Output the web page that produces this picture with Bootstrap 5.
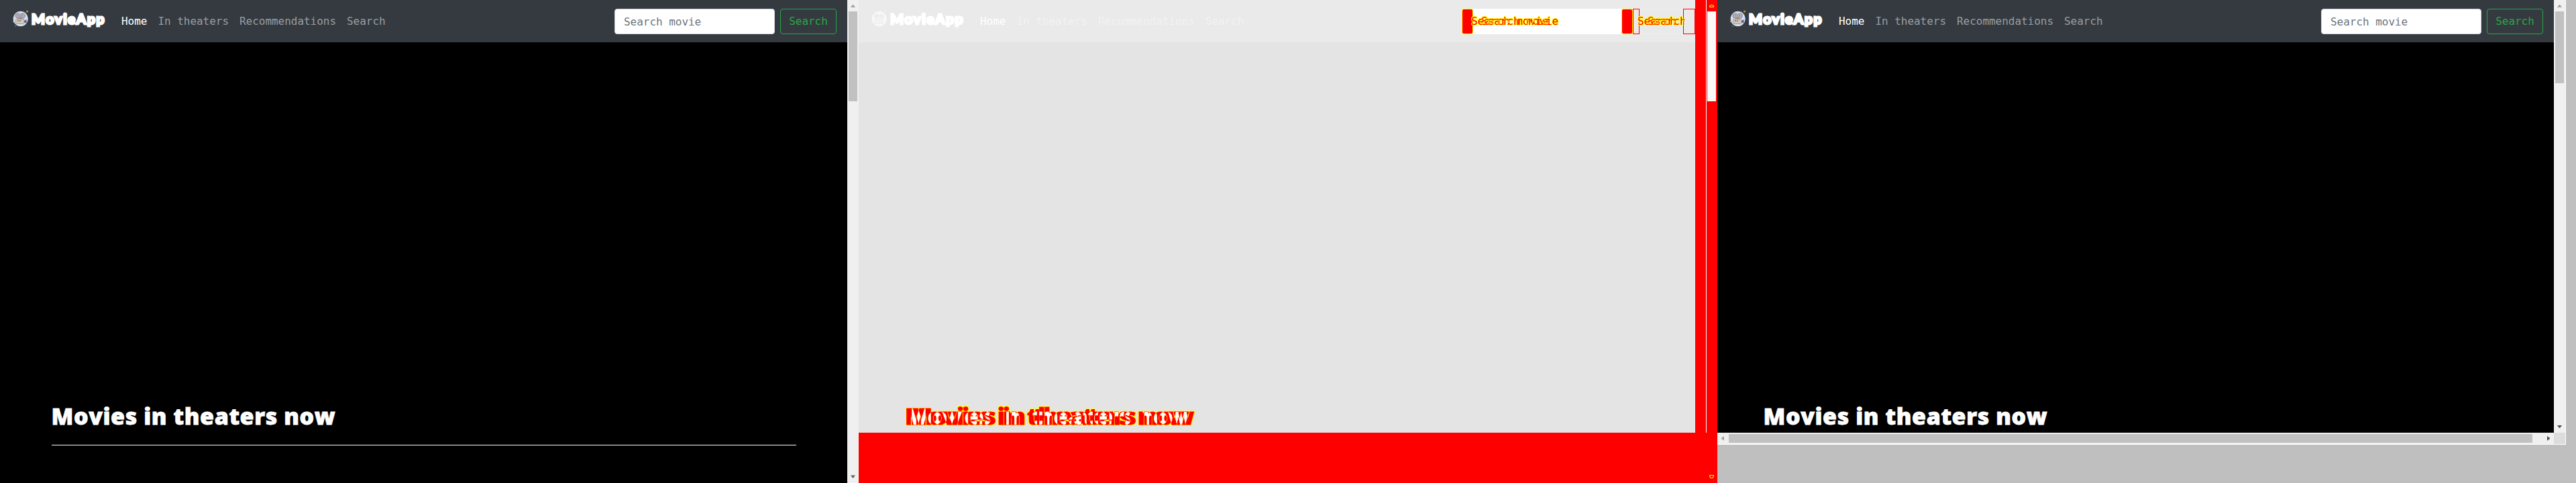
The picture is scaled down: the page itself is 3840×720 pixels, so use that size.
<!DOCTYPE html>
<html lang="en">
<head>
<meta charset="utf-8">
<title>MovieApp</title>
<link href="https://cdn.jsdelivr.net/npm/bootstrap@5.3.0/dist/css/bootstrap.min.css" rel="stylesheet">
<style>
body{width:3840px;height:720px;overflow:hidden;background:#bfbfbf;font-family:"DejaVu Sans Mono",monospace;font-size:16px}
.shot{width:1280px;height:720px;flex:none;overflow:hidden}
.view{background:#000;color:#fff;min-width:0;overflow:hidden}
.topbar{height:63px;background:#343a40;padding:1px 16px 0}
.brand-box{width:141px;height:30px;margin:-8px 16px 0 0;color:#fff}
.brand-box svg{flex:none;margin-left:3px}
.brand-text{font-family:Lato,sans-serif;font-weight:900;font-size:21px;line-height:30px;letter-spacing:1.5px;-webkit-text-stroke:2.8px currentColor;margin-left:4px;white-space:nowrap}
.menu a{padding:8px;color:#999da0;letter-spacing:-.033px;line-height:24px;white-space:nowrap;text-decoration:none}
.menu a.now{color:#fff}
.menu{letter-spacing:-.033px}
.query{width:239px;height:38px;border:1px solid #ced4da;border-radius:4px;padding:6px 12px 6px 13px;background:#fff;color:#6c757d;line-height:24px;letter-spacing:-.033px;white-space:nowrap}
.query::placeholder{color:#6c757d;opacity:1}
.go{width:84px;height:38px;border:1px solid #28a745;border-radius:4px;color:#28a745;padding:6px 12px;line-height:24px;letter-spacing:-.033px;background:none}
.wrap{width:1110px;margin:0 auto;padding-top:534px}
.title{font-family:"Open Sans",sans-serif;font-weight:800;font-size:34px;line-height:46px;letter-spacing:.56px;-webkit-text-stroke:.8px currentColor;margin:0;white-space:nowrap}
.rule{height:1px;background:#fff;margin-top:20px}
.vbar{width:17px;flex:none;background:#f0f0f0}
.arrow{width:17px;height:17px;display:block;flex:none}
.thumb-v{width:13px;margin-left:2px;height:134px;background:#c1c1c1}
.hbar{height:17px;background:#f0f0f0}
.thumb-h{height:13px;width:1198px;background:#c1c1c1}
.pale{background:#e4e4e4}
.pale .topbar{background:#eaeaea}
.pale .menu a{color:#f2f2f2}
.pale .menu a.now{color:#fff}
.red{background:#f00}
.cmp-q{width:255px;height:38px;background:#fff}
.cmp-edge{width:17px;height:38px;background:#f00;border:1px solid #ff0;border-radius:3px}
.cmp-go{width:93px;height:38px;border-top:1px solid #efefef;border-bottom:1px solid #efefef}
.cmp-tick{width:10px;height:38px;border:1px solid #f00}
.ghost{filter:url(#ghost14);color:#000;line-height:24px;white-space:nowrap}
.ghost8{filter:url(#ghost8);color:#000}
.frame{width:1265px;height:663px;border-right:1px solid #fff;border-bottom:1px solid #fff}
</style>
</head>
<body>
<svg width="0" height="0" class="position-absolute">
<defs>
<filter id="ghost14" x="-10%" y="-20%" width="130%" height="140%" color-interpolation-filters="sRGB">
<feOffset in="SourceAlpha" dx="15" result="b"/><feComposite in="SourceAlpha" in2="b" operator="xor" result="d"/>
<feMorphology in="d" operator="dilate" radius="1" result="m"/>
<feFlood flood-color="#ff0"/><feComposite in2="m" operator="in" result="y"/>
<feFlood flood-color="#f00"/><feComposite in2="d" operator="in" result="r"/>
<feMerge><feMergeNode in="y"/><feMergeNode in="r"/></feMerge>
</filter>
<filter id="ghost8" x="-5%" y="-20%" width="110%" height="140%" color-interpolation-filters="sRGB">
<feOffset in="SourceAlpha" dx="8" result="b"/><feComposite in="SourceAlpha" in2="b" operator="xor" result="d"/>
<feComposite in="SourceAlpha" in2="b" operator="in" result="both"/>
<feMorphology in="d" operator="dilate" radius="1" result="m"/>
<feFlood flood-color="#ff0"/><feComposite in2="m" operator="in" result="y"/>
<feFlood flood-color="#f00"/><feComposite in2="d" operator="in" result="r"/>
<feFlood flood-color="#fff"/><feComposite in2="both" operator="in" result="w"/>
<feMerge><feMergeNode in="y"/><feMergeNode in="w"/><feMergeNode in="r"/></feMerge>
</filter>
</defs>
<symbol id="robot" viewBox="0 0 24 24">
<ellipse cx="11.7" cy="12" rx="11" ry="11.3" fill="#cfe0f3"/>
<circle cx="7.5" cy="7.5" r="4.2" fill="#a59b9d"/><circle cx="14.8" cy="7.5" r="4.2" fill="#a59b9d"/>
<circle cx="7.8" cy="7.6" r="2.1" fill="#c4c0d2"/><circle cx="14.5" cy="7.6" r="2.1" fill="#c4c0d2"/>
<circle cx="8" cy="7.6" r=".9" fill="#6a5fa0"/><circle cx="14.3" cy="7.6" r=".9" fill="#6a5fa0"/>
<rect x="8" y="10" width="6.5" height="3" fill="#9b908e"/>
<rect x="4.5" y="12.5" width="12.5" height="7" rx="1.2" fill="#d2c6b4" stroke="#9a8b82" stroke-width=".7"/>
<path d="M17 15l3.5-2v6L17 17z" fill="#62598f"/><path d="M8 14v2M11 14v2" stroke="#665a70" stroke-width="1.3"/>
</symbol>
</svg>
<div class="d-flex">
<section class="shot d-flex">
<div class="view flex-grow-1">
<nav class="topbar d-flex align-items-center">
<div class="brand-box d-flex align-items-center"><svg width="24" height="26" viewBox="0 0 24 26"><use href="#robot" width="24" height="24" y="1"/><circle cx="21.5" cy="2" r="1.5" fill="#c99a1a"/><circle cx="1.3" cy="17" r="1.2" fill="#d9ae49"/><circle cx="4" cy="24" r="1" fill="#4c7898"/></svg><span class="brand-text">MovieApp</span></div>
<div class="menu d-flex"><a href="#" class="now">Home</a><a href="#">In theaters</a><a href="#">Recommendations</a><a href="#">Search</a></div>
<form class="d-flex gap-2 ms-auto"><input class="query" placeholder="Search movie"><button type="button" class="go">Search</button></form>
</nav>
<main class="wrap"><h1 class="title">Movies in theaters now</h1><div class="rule"></div></main>
</div>
<div class="vbar d-flex flex-column">
<svg class="arrow" viewBox="0 0 17 17"><path d="M5 11h7l-3-4h-1z" fill="#a3a3a3"/></svg><div class="thumb-v"></div>
<svg class="arrow mt-auto" viewBox="0 0 17 17"><path d="M5 5.5h7l-3 4h-1z" fill="#606060"/></svg>
</div>
</section>

<section class="shot red">
<div class="d-flex">
<div class="pale" style="width:1247px;height:645px">
<nav class="topbar d-flex align-items-center pe-0">
<div class="brand-box d-flex align-items-center"><svg width="24" height="26" viewBox="0 0 24 26"><ellipse cx="11.7" cy="13" rx="11" ry="11.3" fill="#f8f8f8"/><circle cx="7.5" cy="9" r="3" fill="#f0f0f0" stroke="#e9e9e9"/><circle cx="15" cy="9" r="3" fill="#f0f0f0" stroke="#e9e9e9"/><rect x="5" y="14" width="12" height="6" fill="#f4f4f4" stroke="#eaeaea"/><circle cx="21.5" cy="2" r="1" fill="#f2f2f2"/></svg><span class="brand-text">MovieApp</span></div>
<div class="menu d-flex"><a href="#" class="now">Home</a><a href="#">In theaters</a><a href="#">Recommendations</a><a href="#">Search</a></div>
<div class="d-flex ms-auto menu">
<div class="cmp-q d-flex justify-content-between position-relative"><div class="cmp-edge"></div><div class="cmp-edge"></div><span class="ghost position-absolute top-0 start-0 mt-2 ms-3" style="transform:translate(-2px,-1px)">Search movie</span></div>
<div class="cmp-go d-flex justify-content-between position-relative"><div class="cmp-tick" style="margin-top:-1px"></div><div class="cmp-tick" style="width:18px;margin-top:-1px"></div><span class="ghost position-absolute top-0 start-0 mt-2 ms-1" style="transform:translate(3px,-2px)">Search</span></div>
</div>
</nav>
<main style="padding:534px 0 0 69px"><h2 class="title ghost8">Movies in theaters now</h2></main>
</div>
<div style="width:16px"></div>
<div class="bg-white" style="width:1px;height:645px"></div>
<div style="width:16px">
<svg class="arrow" viewBox="0 0 17 17" width="17" height="17"><path d="M4.5 10.5h6v-2h-1.500v-1h-3v1h-1.500z" fill="none" stroke="#ff0"/></svg>
<div style="width:13px;height:134px;margin-left:1px;background:#f8f8f8"></div>
</div>
</div>
<div class="d-flex justify-content-end" style="padding-top:58px"><svg class="arrow" viewBox="0 0 17 17"><path d="M5.500 5.500h6v2h-1v2h-4v-2h-1z" fill="none" stroke="#ff0"/></svg></div>
</section>

<section class="shot">
<div class="frame">
<div class="d-flex" style="height:645px">
<div class="view flex-grow-1">
<nav class="topbar d-flex align-items-center">
<div class="brand-box d-flex align-items-center"><svg width="24" height="26" viewBox="0 0 24 26"><use href="#robot" width="24" height="24" y="1"/><circle cx="21.5" cy="2" r="1.5" fill="#c99a1a"/><circle cx="1.3" cy="17" r="1.2" fill="#d9ae49"/><circle cx="4" cy="24" r="1" fill="#4c7898"/></svg><span class="brand-text">MovieApp</span></div>
<div class="menu d-flex"><a href="#" class="now">Home</a><a href="#">In theaters</a><a href="#">Recommendations</a><a href="#">Search</a></div>
<form class="d-flex gap-2 ms-auto"><input class="query" placeholder="Search movie"><button type="button" class="go">Search</button></form>
</nav>
<main class="wrap"><h2 class="title">Movies in theaters now</h2></main>
</div>
<div class="vbar d-flex flex-column">
<svg class="arrow" viewBox="0 0 17 17"><path d="M5 11h7l-3-4h-1z" fill="#a3a3a3"/></svg><div class="thumb-v" style="height:107px"></div>
<svg class="arrow mt-auto" viewBox="0 0 17 17"><path d="M5 6h7l-3 4h-1z" fill="#505050"/></svg>
</div>
</div>
<div class="hbar d-flex align-items-center">
<svg class="arrow" viewBox="0 0 17 17"><path d="M10 5v7l-4-3v-1z" fill="#a3a3a3"/></svg><div class="thumb-h"></div>
<svg class="arrow ms-auto" viewBox="0 0 17 17"><path d="M7 5v7l4-3v-1z" fill="#505050"/></svg><div class="arrow" style="background:#dcdcdc"></div>
</div>
</div>
</section>
</div>
<script src="https://cdn.jsdelivr.net/npm/bootstrap@5.3.0/dist/js/bootstrap.bundle.min.js"></script>
</body>
</html>
